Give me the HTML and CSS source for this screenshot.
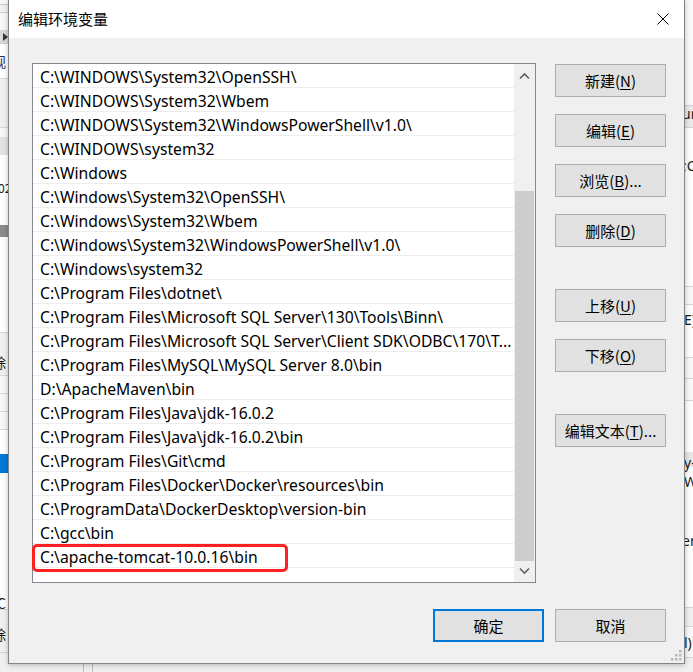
FILE: index.html
```html
<!DOCTYPE html>
<html lang="zh-CN">
<head>
<meta charset="utf-8">
<title>编辑环境变量</title>
<link rel="stylesheet" href="styles.css">
</head>
<body>
<div class="screen">
  <div class="bg-left">
    <span class="tri"></span>
    <span class="snip l-guan">观</span>
    <span class="snip l-02">02</span>
    <span class="snip l-chu1">除</span>
    <span class="snip l-c">C</span>
    <span class="snip l-chu2">除</span>
  </div>
  <div class="dialog">
    <div class="titlebar">
      <span class="title">编辑环境变量</span>
      <svg class="close" width="12" height="12" viewBox="0 0 12 12"><path d="M0.5 0.5 L11.5 11.5 M11.5 0.5 L0.5 11.5" stroke="#000" stroke-width="1" fill="none"/></svg>
    </div>
    <div class="content">
      <div class="main">
        <div class="listwrap">
          <div class="list">
            <div class="rows">
              <div class="row">C:\WINDOWS\System32\OpenSSH\</div>
              <div class="row">C:\WINDOWS\System32\Wbem</div>
              <div class="row">C:\WINDOWS\System32\WindowsPowerShell\v1.0\</div>
              <div class="row">C:\WINDOWS\system32</div>
              <div class="row">C:\Windows</div>
              <div class="row">C:\Windows\System32\OpenSSH\</div>
              <div class="row">C:\Windows\System32\Wbem</div>
              <div class="row">C:\Windows\System32\WindowsPowerShell\v1.0\</div>
              <div class="row">C:\Windows\system32</div>
              <div class="row">C:\Program Files\dotnet\</div>
              <div class="row">C:\Program Files\Microsoft SQL Server\130\Tools\Binn\</div>
              <div class="row">C:\Program Files\Microsoft SQL Server\Client SDK\ODBC\170\T...</div>
              <div class="row">C:\Program Files\MySQL\MySQL Server 8.0\bin</div>
              <div class="row">D:\ApacheMaven\bin</div>
              <div class="row">C:\Program Files\Java\jdk-16.0.2</div>
              <div class="row">C:\Program Files\Java\jdk-16.0.2\bin</div>
              <div class="row">C:\Program Files\Git\cmd</div>
              <div class="row">C:\Program Files\Docker\Docker\resources\bin</div>
              <div class="row">C:\ProgramData\DockerDesktop\version-bin</div>
              <div class="row">C:\gcc\bin</div>
              <div class="row">C:\apache-tomcat-10.0.16\bin</div>
            </div>
            <div class="scrollbar">
              <div class="sb-btn">
                <svg width="21" height="21" viewBox="0 0 21 21"><path d="M6 14.5 L10.5 10 L15 14.5" stroke="#606060" stroke-width="1.6" fill="none"/></svg>
              </div>
              <div class="sb-track"><div class="sb-thumb"></div></div>
              <div class="sb-btn">
                <svg width="21" height="21" viewBox="0 0 21 21"><path d="M6 7.5 L10.5 12 L15 7.5" stroke="#606060" stroke-width="1.6" fill="none"/></svg>
              </div>
            </div>
          </div>
          <div class="highlight"></div>
        </div>
        <div class="side">
          <div class="btn">新建(<u>N</u>)</div>
          <div class="btn">编辑(<u>E</u>)</div>
          <div class="btn">浏览(<u>B</u>)...</div>
          <div class="btn">删除(<u>D</u>)</div>
          <div class="btn sep">上移(<u>U</u>)</div>
          <div class="btn">下移(<u>O</u>)</div>
          <div class="btn sep">编辑文本(<u>T</u>)...</div>
        </div>
      </div>
      <div class="footer">
        <div class="btn default">确定</div>
        <div class="btn">取消</div>
      </div>
      <svg class="grip" width="12" height="12" viewBox="0 0 12 12">
        <rect x="9" y="0" width="2.5" height="2.5" fill="#b8b8b8"/>
        <rect x="5" y="4" width="2.5" height="2.5" fill="#b8b8b8"/>
        <rect x="9" y="4" width="2.5" height="2.5" fill="#b8b8b8"/>
        <rect x="1" y="8" width="2.5" height="2.5" fill="#b8b8b8"/>
        <rect x="5" y="8" width="2.5" height="2.5" fill="#b8b8b8"/>
        <rect x="9" y="8" width="2.5" height="2.5" fill="#b8b8b8"/>
      </svg>
    </div>
  </div>
  <div class="bg-right">
    <span class="snip r-ur">ur</span>
    <span class="snip r-c">;C</span>
    <span class="snip r-e">E)</span>
    <span class="snip r-y">y-</span>
    <span class="snip r-w">W</span>
    <span class="snip r-er">er</span>
    <span class="snip r-l">l)</span>
  </div>
</div>
<div class="bg-bottom"></div>
</body>
</html>
```

FILE: styles.css
```css
* { box-sizing: border-box; }
html, body { margin: 0; padding: 0; }
body {
  width: 693px;
  height: 672px;
  overflow: hidden;
  background: #f0f0f0;
  font-family: "Noto Sans", "Noto Sans CJK SC", sans-serif;
  color: #000;
}
.screen { display: flex; height: 664px; }

/* background windows peeking out */
.bg-left, .bg-right {
  width: 8px;
  flex: none;
  overflow: hidden;
  display: flex;
  flex-direction: column;
  align-items: flex-start;
}
.bg-left {
  background: linear-gradient(to bottom,
    #f7f7f7 0 4px, #cfcfcf 4px 5px, #f0f0f0 5px 12px, #cfcfcf 12px 13px,
    #f7f7f7 13px 30px, #d9d9d9 30px 43px, #cfcfcf 43px 44px, #ffffff 44px 78px,
    #d6d6d6 78px 79px, #f0f0f0 79px 127px, #d6d6d6 127px 128px, #f7f7f7 128px 137px,
    #e3e3e3 137px 155px, #ffffff 155px 225px, #8c8c8c 225px 237px, #ffffff 237px 332px,
    #d6d6d6 332px 333px, #f0f0f0 333px 375px, #d6d6d6 375px 376px, #f7f7f7 376px 393px,
    #d6d6d6 393px 394px, #f7f7f7 394px 411px, #d6d6d6 411px 412px, #f7f7f7 412px 429px,
    #d6d6d6 429px 430px, #ffffff 430px 454px, #0078d7 454px 473px, #ffffff 473px 609px,
    #d6d6d6 609px 610px, #f0f0f0 610px 652px, #d6d6d6 652px 653px, #f0f0f0 653px);
}
.bg-right {
  background: linear-gradient(to bottom,
    #f9f9f9 0 105px, #d4d4d4 105px 106px, #e9e9e9 106px 127px, #d4d4d4 127px 128px,
    #fdfdfd 128px 286px, #d4d4d4 286px 287px, #f7f7f7 287px 304px, #d4d4d4 304px 305px,
    #fdfdfd 305px 357px, #d4d4d4 357px 358px, #f7f7f7 358px 378px, #d4d4d4 378px 379px,
    #f7f7f7 379px 400px, #d4d4d4 400px 401px, #fdfdfd 401px 452px, #e6e6e6 452px 467px,
    #fdfdfd 467px 607px, #d4d4d4 607px 608px, #f0f0f0 608px 626px, #d4d4d4 626px 627px,
    #f7f7f7 627px 657px, #d4d4d4 657px 658px, #f0f0f0 658px);
}
.snip {
  display: block;
  height: 15px;
  line-height: 15px;
  font-size: 14px;
  white-space: nowrap;
  color: #1a1a1a;
}
.tri {
  display: block;
  width: 0;
  height: 0;
  margin: 33px 0 0 3px;
  border-left: 5px solid #333;
  border-top: 4px solid transparent;
  border-bottom: 4px solid transparent;
}
.bg-left .snip { font-family: "Noto Sans CJK SC", sans-serif; }
.l-guan { margin: 13px 0 0 -8px; color: #2a2a5a; }
.l-02 { margin: 111px 0 0 -2px; font-size: 12px; }
.l-chu1 { margin: 160px 0 0 -8px; }
.l-c { margin: 226px 0 0 -3px; }
.l-chu2 { margin: 16px 0 0 -8px; }

.r-ur { margin: 106px 0 0 -3px; }
.r-c { margin: 37px 0 0 -2px; }
.r-e { margin: 139px 0 0 -1px; }
.r-y { margin: 128px 0 0 -1px; }
.r-w { margin: 4px 0 0 -1px; }
.r-er { margin: 44px 0 0 -3px; }
.r-l { margin: 87px 0 0 -1px; }

.bg-bottom {
  height: 8px;
  background: linear-gradient(to right,
    #f0f0f0 0 83px, #bdbdbd 83px 84px, #f0f0f0 84px 92px, #bdbdbd 92px 93px, #f0f0f0 93px);
}

/* dialog */
.dialog {
  width: 677px;
  height: 664px;
  flex: none;
  border: 1px solid #858585;
  border-top: none;
  background: #f0f0f0;
  display: flex;
  flex-direction: column;
  position: relative;
  z-index: 1;
  box-shadow: 0 1px 5px rgba(0, 0, 0, 0.25);
}
.titlebar {
  height: 38px;
  flex: none;
  background: #fff;
  display: flex;
  align-items: center;
  justify-content: space-between;
  padding: 0 15px 0 9px;
}
.title {
  font-family: "Noto Sans CJK SC", sans-serif;
  font-size: 15px;
  line-height: 20px;
}
.close { display: block; }

.content {
  flex: 1;
  padding: 25px 18px 0 23px;
  position: relative;
}
.main { display: flex; gap: 19px; }

.listwrap {
  position: relative;
  width: 504px;
  height: 520px;
  flex: none;
}
.list {
  width: 100%;
  height: 100%;
  border: 1px solid #828790;
  background: #fff;
  display: flex;
}
.rows { flex: 1; overflow: hidden; }
.row {
  height: 24px;
  border-bottom: 1px solid #ededed;
  padding: 3px 0 0 7px;
  line-height: 20px;
  font-size: 15.7px;
  white-space: nowrap;
  overflow: hidden;
}
.scrollbar {
  width: 21px;
  flex: none;
  background: #f0f0f0;
  display: flex;
  flex-direction: column;
}
.sb-btn { height: 21px; flex: none; }
.sb-btn svg { display: block; }
.sb-track { flex: 1; padding: 106px 1px 0; }
.sb-thumb { height: 370px; background: #cdcdcd; }

.highlight {
  position: absolute;
  left: 0;
  top: 481px;
  width: 256px;
  height: 28px;
  border: 3px solid #ff2020;
  border-radius: 5px;
}

.side {
  width: 111px;
  flex: none;
  display: flex;
  flex-direction: column;
  gap: 17px;
  padding-top: 1px;
}
.btn {
  height: 33px;
  border: 1px solid #adadad;
  background: #e1e1e1;
  display: flex;
  align-items: center;
  justify-content: center;
  font-family: "Noto Sans CJK SC", sans-serif;
  font-size: 15px;
  color: #000;
  white-space: nowrap;
}
.btn u { text-decoration: underline; text-underline-offset: 2px; }
.btn.sep { margin-top: 25px; }

.footer {
  display: flex;
  justify-content: flex-end;
  gap: 11px;
  margin-top: 26px;
}
.footer .btn { width: 111px; }
.btn.default { border: 2px solid #0078d7; }

.grip {
  position: absolute;
  right: 2px;
  bottom: 1px;
}
```
